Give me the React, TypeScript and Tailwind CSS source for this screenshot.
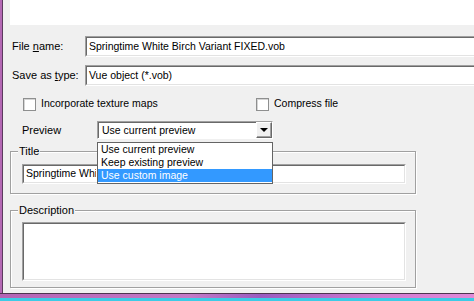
import React from "react";

const font = "[font-family:'Liberation_Sans',Arial,sans-serif]";

// classic sunken edit box
const Sunken = ({ className = "", children }: { className?: string; children?: React.ReactNode }) => (
    <div className={`border border-t-[#a0a0a0] border-l-[#a0a0a0] border-b-white border-r-white ${className}`}>
        <div className="w-full h-full bg-white border border-t-[#696969] border-l-[#696969] border-b-[#e3e3e3] border-r-[#e3e3e3] flex items-center overflow-hidden whitespace-nowrap">
            {children}
        </div>
    </div>
);

const CheckBox = ({ label }: { label: string }) => (
    <div className="flex items-center gap-[5px] whitespace-nowrap">
        <div className="w-[13px] h-[13px] bg-white border border-[#8e8f8f] shadow-[inset_1px_1px_0_#d5d5d5]" />
        <span>{label}</span>
    </div>
);

const GroupBox = ({ title, className = "", children }: { title: string; className?: string; children?: React.ReactNode }) => (
    <div className={`relative ml-[7px] w-[406px] border border-[#a0a0a0] shadow-[1px_1px_0_white,inset_1px_1px_0_white] ${className}`}>
        <span className="absolute -top-[8px] left-[7px] bg-[#f0f0f0] px-[1px] leading-[14px] text-[11px]">{title}</span>
        {children}
    </div>
);

export default function App() {
    return (
        <div className={`w-[474px] h-[301px] overflow-hidden flex flex-col bg-[#f0f0f0] text-[10.5px] text-black ${font}`}>
            <div className="flex flex-1 min-h-0">
                <div className="w-[2px] bg-[#b468b4]" />
                <div className="w-[1px] bg-[#5c3a5e]" />
                <div className="flex-1 flex flex-col min-w-0">
                    <div className="ml-[7px] h-[25px] bg-white" />

                    {/* File name */}
                    <div className="flex items-center mt-[11px] h-[21px]">
                        <span className="w-[82px] shrink-0 pl-[9px] whitespace-nowrap text-[11px]">File <u>n</u>ame:</span>
                        <Sunken className="w-[420px] h-[21px] shrink-0">
                            <span className="pl-[2px]">Springtime White Birch Variant FIXED.vob</span>
                        </Sunken>
                    </div>

                    {/* Save as type */}
                    <div className="flex items-center mt-[8px] h-[21px]">
                        <span className="w-[82px] shrink-0 pl-[9px] whitespace-nowrap text-[11px]">Save as <u>t</u>ype:</span>
                        <Sunken className="w-[420px] h-[21px] shrink-0">
                            <span className="pl-[2px]">Vue object (*.vob)</span>
                        </Sunken>
                    </div>

                    {/* checkboxes */}
                    <div className="flex items-center mt-[11px] h-[14px] pl-[20px]">
                        <div className="w-[233px] shrink-0">
                            <CheckBox label="Incorporate texture maps" />
                        </div>
                        <CheckBox label="Compress file" />
                    </div>

                    {/* Preview combo */}
                    <div className="flex items-center mt-[10px] h-[18px] pl-[19px] relative">
                        <span className="w-[75px] shrink-0 text-[11px]">Preview</span>
                        <div className="w-[176px] h-[18px] shrink-0 flex border border-t-[#a0a0a0] border-l-[#a0a0a0] border-b-white border-r-white">
                            <div className="flex-1 bg-white flex items-center pl-[3px] border-t border-l border-[#696969] whitespace-nowrap">Use current preview</div>
                            <div className="w-[16px] flex items-center justify-center border border-t-white border-l-white border-b-[#696969] border-r-[#696969] bg-[#f0f0f0] shadow-[inset_-1px_-1px_0_#a0a0a0]">
                                <div className="w-0 h-0 border-l-[4px] border-r-[4px] border-t-[4px] border-l-transparent border-r-transparent border-t-black" />
                            </div>
                        </div>

                        {/* open list */}
                        <div className="absolute z-10 left-[94px] top-[21px] w-[176px] bg-white border border-[#646464] flex flex-col leading-[13px] pb-[1px] whitespace-nowrap">
                            <div className="h-[13px] pl-[3px]">Use current preview</div>
                            <div className="h-[13px] pl-[3px]">Keep existing preview</div>
                            <div className="h-[13px] pl-[3px] bg-[#3399ff] text-white">Use custom image</div>
                        </div>
                    </div>

                    {/* Title */}
                    <GroupBox title="Title" className="mt-[12px] h-[43px] pt-[12px] pl-[11px]">
                        <Sunken className="w-[384px] h-[20px]">
                            <span className="pl-[2px] w-[72px] shrink-0 overflow-hidden">Springtime White Birch Variant FIXED</span>
                        </Sunken>
                    </GroupBox>

                    {/* Description */}
                    <GroupBox title="Description" className="mt-[16px] h-[78px] pt-[11px] pl-[11px]">
                        <Sunken className="w-[384px] h-[59px]" />
                    </GroupBox>
                </div>
            </div>
            <div className="h-[1px] bg-[#4e3450]" />
            <div className="h-[4px] bg-[linear-gradient(90deg,#b464b4,#c47ac6_40%,#9a5cc0_55%,#d27ad0_80%,#e08ad8)]" />
            <div className="h-[3px] bg-[#3ccbe6]" />
        </div>
    );
}
